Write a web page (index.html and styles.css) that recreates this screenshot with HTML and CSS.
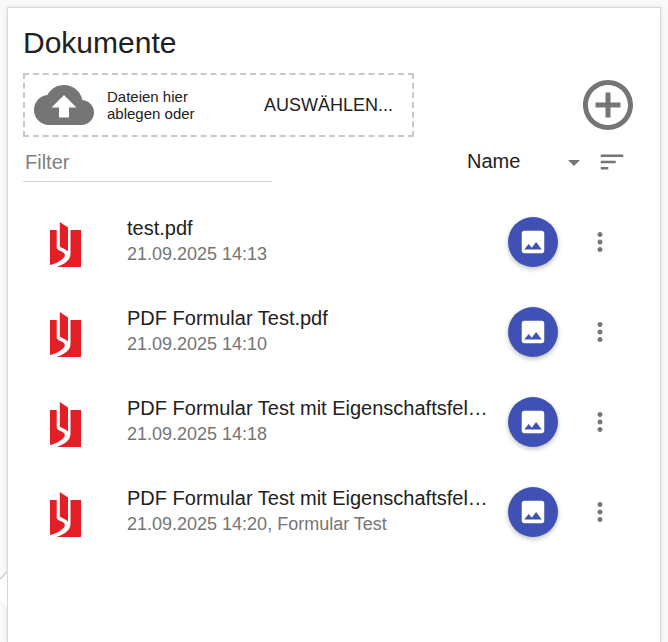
FILE: index.html
```html
<!DOCTYPE html>
<html lang="de">
<head>
<meta charset="utf-8">
<meta name="viewport" content="width=device-width, initial-scale=1">
<title>Dokumente</title>
<link rel="stylesheet" href="styles.css">
</head>
<body>
<svg class="symbols" aria-hidden="true">
  <symbol id="logo" viewBox="0 0 31 45">
    <path fill="#e31e24" d="M0 8H6.700V25.500C7 28.500 10 28.500 12.500 30C15.500 31.800 15.500 34 13 36.500C10 39.500 5 41.800 0 43ZM9.800 0L18 5.500V29.500C16 27 12 26.500 9.800 24.500ZM20.500 8H31V45H6.500C14 42.500 20.500 38.500 20.500 32Z"/>
  </symbol>
  <symbol id="image" viewBox="0 0 24 24">
    <path fill="currentColor" d="M21 19V5c0-1.100-.9-2-2-2H5c-1.100 0-2 .9-2 2v14c0 1.100.9 2 2 2h14c1.100 0 2-.9 2-2zM8.500 13.500l2.500 3.010L14.500 12l4.500 6H5l3.500-4.500z"/>
  </symbol>
  <symbol id="more" viewBox="0 0 24 24">
    <path fill="currentColor" d="M12 8c1.100 0 2-.9 2-2s-.9-2-2-2-2 .9-2 2 .9 2 2 2zm0 2c-1.100 0-2 .9-2 2s.9 2 2 2 2-.9 2-2-.9-2-2-2zm0 6c-1.100 0-2 .9-2 2s.9 2 2 2 2-.9 2-2-.9-2-2-2z"/>
  </symbol>
</svg>
<svg class="pointer" viewBox="0 0 7 36" aria-hidden="true">
  <path fill="#fff" d="M7 0L0 7V26L7 35Z"/>
  <path fill="none" stroke="#ccc" stroke-width="1.500" d="M7 0L0 7"/>
</svg>
<main class="panel">
  <h1 class="title">Dokumente</h1>
  <div class="upload-row">
    <div class="dropzone">
      <svg class="cloud" viewBox="0 0 24 24" aria-hidden="true"><path fill="currentColor" d="M19.350 10.040C18.670 6.590 15.640 4 12 4 9.110 4 6.600 5.640 5.350 8.040 2.340 8.360 0 10.910 0 14c0 3.310 2.690 6 6 6h13c2.760 0 5-2.240 5-5 0-2.640-2.050-4.780-4.650-4.960zM14 13v4h-4v-4H7l5-5 5 5h-3z"/></svg>
      <p class="hint">Dateien hier<br>ablegen oder</p>
      <button class="choose" type="button">AUSWÄHLEN...</button>
    </div>
    <button class="icon-button add" type="button" aria-label="Hinzufügen">
      <svg viewBox="0 0 24 24"><path fill="currentColor" d="M13 7h-2v4H7v2h4v4h2v-4h4v-2h-4V7zm-1-5C6.480 2 2 6.480 2 12s4.480 10 10 10 10-4.480 10-10S17.520 2 12 2zm0 18c-4.410 0-8-3.590-8-8s3.590-8 8-8 8 3.590 8 8-3.590 8-8 8z"/></svg>
    </button>
  </div>
  <div class="filter-row">
    <input class="filter" type="text" placeholder="Filter" aria-label="Filter">
    <div class="sort">
      <select class="sort-field" aria-label="Sortieren nach"><option>Name</option></select>
      <svg class="caret" viewBox="0 0 12 6" aria-hidden="true"><path fill="currentColor" d="M0 0h12L6 6z"/></svg>
    </div>
    <button class="icon-button small" type="button" aria-label="Sortierreihenfolge">
      <svg viewBox="0 0 24 24"><path fill="currentColor" d="M3 18h6v-2H3v2zM3 6v2h18V6H3zm0 7h12v-2H3v2z"/></svg>
    </button>
  </div>
  <ul class="documents">
    <li class="document">
      <svg class="logo" aria-hidden="true"><use href="#logo"/></svg>
      <div class="info"><h2 class="name">test.pdf</h2><p class="meta">21.09.2025 14:13</p></div>
      <button class="preview" type="button" aria-label="Vorschau"><svg><use href="#image"/></svg></button>
      <button class="icon-button small" type="button" aria-label="Mehr"><svg><use href="#more"/></svg></button>
    </li>
    <li class="document">
      <svg class="logo" aria-hidden="true"><use href="#logo"/></svg>
      <div class="info"><h2 class="name">PDF Formular Test.pdf</h2><p class="meta">21.09.2025 14:10</p></div>
      <button class="preview" type="button" aria-label="Vorschau"><svg><use href="#image"/></svg></button>
      <button class="icon-button small" type="button" aria-label="Mehr"><svg><use href="#more"/></svg></button>
    </li>
    <li class="document">
      <svg class="logo" aria-hidden="true"><use href="#logo"/></svg>
      <div class="info"><h2 class="name">PDF Formular Test mit Eigenschaftsfel…</h2><p class="meta">21.09.2025 14:18</p></div>
      <button class="preview" type="button" aria-label="Vorschau"><svg><use href="#image"/></svg></button>
      <button class="icon-button small" type="button" aria-label="Mehr"><svg><use href="#more"/></svg></button>
    </li>
    <li class="document">
      <svg class="logo" aria-hidden="true"><use href="#logo"/></svg>
      <div class="info"><h2 class="name">PDF Formular Test mit Eigenschaftsfel…</h2><p class="meta">21.09.2025 14:20, Formular Test</p></div>
      <button class="preview" type="button" aria-label="Vorschau"><svg><use href="#image"/></svg></button>
      <button class="icon-button small" type="button" aria-label="Mehr"><svg><use href="#more"/></svg></button>
    </li>
  </ul>
</main>
</body>
</html>
```
FILE: styles.css
```css
* { box-sizing: border-box; }

body {
  margin: 0;
  padding: 8px 8px 0;
  min-height: 100vh;
  display: flex;
  background: #f9f9f9;
  color: #212121;
  font-family: "Liberation Sans", Arial, sans-serif;
  overflow: hidden;
}

h1, h2, p, ul { margin: 0; padding: 0; font-weight: 400; }
svg { display: block; }
button, input, select {
  margin: 0;
  padding: 0;
  border: 0;
  background: none;
  color: inherit;
  font: inherit;
}

.symbols { position: absolute; width: 0; height: 0; }
.pointer { position: absolute; left: 0; top: 572px; width: 7px; height: 36px; }

.panel {
  flex: 1;
  min-width: 0;
  padding: 17px 15px 16px;
  background: #fff;
  box-shadow: 0 0 0 1px #d6d6d6, 0 0 6px rgba(0, 0, 0, 0.14);
}

.title { font-size: 30px; line-height: 36px; }

.upload-row {
  display: flex;
  align-items: center;
  justify-content: space-between;
  margin-top: 12px;
  padding-right: 7px;
}

.dropzone {
  display: flex;
  align-items: center;
  width: 391px;
  height: 64px;
  padding: 0 19px 0 9px;
  border: 2px dashed #c8c8c8;
}

.cloud { width: 60px; height: 60px; color: #757575; }
.hint { margin-left: 13px; font-size: 15px; line-height: 17px; }
.choose { margin-left: auto; font-size: 18px; }

.icon-button { display: grid; place-items: center; color: #757575; }
.icon-button svg { width: 100%; height: 100%; }
.add { width: 60px; height: 60px; }
.small { width: 30px; height: 30px; }

.filter-row {
  display: flex;
  align-items: center;
  height: 50px;
  padding-right: 18px;
}

.filter {
  width: 249px;
  height: 40px;
  padding: 1px 2px 0;
  border-bottom: 1px solid #d4d4d4;
  font-size: 20px;
}
.filter::placeholder { color: #808080; opacity: 1; }

.sort { position: relative; width: 113px; margin: 0 17px 2px auto; }
.sort-field { width: 100%; appearance: none; font-size: 20px; }
.caret { position: absolute; right: 0; top: 10px; width: 12px; height: 6px; color: #757575; pointer-events: none; }

.documents { margin-top: 10px; list-style: none; }

.document {
  display: flex;
  align-items: center;
  height: 90px;
  padding: 0 30px 0 27px;
}

.logo { width: 31px; height: 45px; margin-top: 5px; }
.info { flex: 1; min-width: 0; margin: 0 10px 4px 46px; }
.name {
  overflow: hidden;
  font-size: 20px;
  line-height: 28px;
  text-overflow: ellipsis;
  white-space: nowrap;
}
.meta { color: #757575; font-size: 18px; line-height: 24px; }

.preview {
  display: grid;
  place-items: center;
  width: 50px;
  height: 50px;
  margin-right: 27px;
  border-radius: 50%;
  background: #3f51b5;
  color: #fff;
  box-shadow: 0 2px 5px rgba(0, 0, 0, 0.26);
}
.preview svg { width: 30px; height: 30px; }
```
